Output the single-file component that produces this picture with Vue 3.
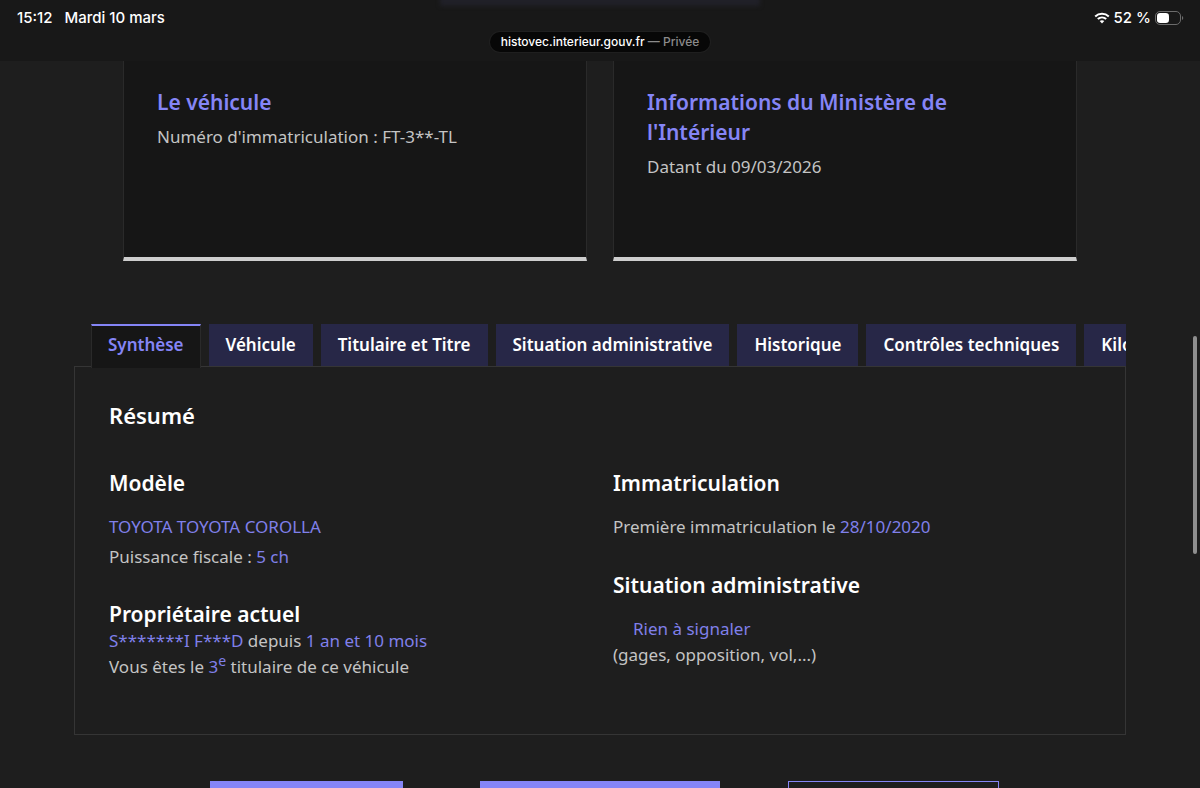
<script setup>
import { ref } from 'vue'

const tabs = [
  'Synthèse',
  'Véhicule',
  'Titulaire et Titre',
  'Situation administrative',
  'Historique',
  'Contrôles techniques',
  'Kilométrage',
]
const active = ref(0)
</script>

<template>
  <div class="screen">
    <header class="status">
      <div class="glow"></div>
      <div class="status-row">
        <div class="clock"><span>15:12</span><span>Mardi 10 mars</span></div>
        <div class="power">
          <svg class="wifi" width="16" height="12" viewBox="0 0 16 12" aria-hidden="true">
            <path d="M1.2 4.5C5 .9 11 .9 14.8 4.5" fill="none" stroke="#fff" stroke-width="2" />
            <path d="M3.8 7.1C6.2 4.9 9.8 4.9 12.2 7.1" fill="none" stroke="#fff" stroke-width="2" />
            <path d="M5.7 9.1C7 7.9 9 7.9 10.3 9.1L8 11.5Z" fill="#fff" />
          </svg>
          <span>52 %</span>
          <svg width="29" height="14" viewBox="0 0 29 14" aria-hidden="true">
            <rect x="0.5" y="0.5" width="25" height="13" rx="4.5" fill="none" stroke="#6b6b6b" />
            <rect x="2" y="2" width="12" height="10" rx="3.2" fill="#fff" />
            <path d="M27 5v4c1.7-.6 1.7-3.4 0-4Z" fill="#6b6b6b" />
          </svg>
        </div>
      </div>
      <div class="address">histovec.interieur.gouv.fr <span>— Privée</span></div>
    </header>

    <main>
      <section class="cards">
        <article class="card">
          <h3>Le véhicule</h3>
          <p>Numéro d'immatriculation : FT-3**-TL</p>
        </article>
        <article class="card">
          <h3>Informations du Ministère de l'Intérieur</h3>
          <p>Datant du 09/03/2026</p>
        </article>
      </section>

      <section class="report">
        <div class="tabs" role="tablist">
          <button
            v-for="(tab, i) in tabs"
            :key="tab"
            type="button"
            role="tab"
            class="tab"
            :class="{ active: i === active }"
            :aria-selected="i === active"
            @click="active = i"
          >{{ tab }}</button>
        </div>
        <div class="panel" role="tabpanel">
          <h2>Résumé</h2>
          <div class="columns">
            <div>
              <h4>Modèle</h4>
              <p class="first"><b>TOYOTA TOYOTA COROLLA</b></p>
              <p class="spaced">Puissance fiscale : <b>5 ch</b></p>
              <h4 class="next tight">Propriétaire actuel</h4>
              <p><b>S*******I F***D</b> depuis <b>1 an et 10 mois</b></p>
              <p>Vous êtes le <b>3<sup>e</sup></b> titulaire de ce véhicule</p>
            </div>
            <div>
              <h4>Immatriculation</h4>
              <p class="first">Première immatriculation le <b>28/10/2020</b></p>
              <h4 class="next">Situation administrative</h4>
              <p class="first indent"><b>Rien à signaler</b></p>
              <p>(gages, opposition, vol,...)</p>
            </div>
          </div>
        </div>
      </section>

      <div class="actions">
        <button type="button" class="action small"></button>
        <button type="button" class="action large"></button>
        <button type="button" class="action outline"></button>
      </div>
    </main>
    <div class="scrollbar"></div>
  </div>
</template>

<style>
body {
  background: #1e1e1e;
}
</style>

<style scoped>
* {
  box-sizing: border-box;
}
.screen {
  position: relative;
  height: 100vh;
  overflow: hidden;
  background: #1e1e1e;
  color: #c4c4c4;
  font-family: "Noto Sans", "Liberation Sans", sans-serif;
  font-size: 17px;
  line-height: 26px;
}
h2, h3, h4, p {
  margin: 0;
}
.status {
  position: relative;
  height: 61px;
  background: #181818;
  color: #fff;
  font-family: Inter, "Liberation Sans", sans-serif;
  font-size: 15px;
  font-weight: 500;
  line-height: 20px;
  overflow: hidden;
}
.glow {
  position: absolute;
  top: -8px;
  left: 50%;
  width: 320px;
  height: 14px;
  margin-left: -160px;
  background: #202028;
  filter: blur(2px);
}
.status-row {
  display: flex;
  justify-content: space-between;
  padding: 8px 16px 0 17px;
}
.clock {
  display: flex;
  gap: 12px;
}
.power {
  display: flex;
  align-items: center;
  gap: 4px;
}
.address {
  width: max-content;
  margin: 4px auto 0;
  padding: 0 11px;
  border-radius: 10px;
  background: #070707;
  box-shadow: 0 0 0 1px #1f1f1f;
  font-size: 12px;
}
.address span {
  color: #8b8b8b;
}
.cards {
  display: grid;
  grid-template-columns: 1fr 1fr;
  gap: 26px;
  margin: 0 123px;
}
.card {
  height: 200px;
  padding: 26px 33px 0;
  background: #161616;
  border: 1px solid #2a2a2a;
  border-top: 0;
  border-bottom: 4px solid #cecece;
}
.card h3 {
  margin-bottom: 7px;
  color: #8585f6;
  font-size: 21px;
  font-weight: 600;
  line-height: 30px;
}
.report {
  margin: 63px 74px 0;
}
.tabs {
  position: relative;
  display: flex;
  gap: 8px;
  height: 44px;
  margin: 0 0 -2px 17px;
  overflow: hidden;
}
.tab {
  flex: none;
  height: 42px;
  padding: 0 17px;
  border: 0;
  background: #272747;
  color: #fff;
  font: inherit;
  font-weight: 600;
}
.tab.active {
  height: 44px;
  padding: 0 16px 4px;
  border: 1px solid #2a2a2a;
  border-top: 2px solid #8585f6;
  border-bottom: 0;
  background: #161616;
  color: #8585f6;
}
.panel {
  padding: 33px 8px 54px 34px;
  border: 1px solid #353535;
}
h2, h4 {
  color: #fff;
  font-size: 21px;
  font-weight: 600;
  line-height: 30px;
}
h2 {
  font-size: 22px;
}
.columns {
  display: grid;
  grid-template-columns: 1fr 1fr;
  margin-top: 38px;
}
.first {
  margin-top: 16px;
}
.spaced {
  margin-top: 4px;
}
.next {
  margin-top: 30px;
}
.tight {
  line-height: 28px;
}
.indent {
  padding-left: 20px;
}
b {
  color: #8080ea;
  font-weight: 400;
}
sup {
  font-size: 14px;
  line-height: 0;
}
.actions {
  display: grid;
  grid-template-columns: repeat(3, 1fr);
  justify-items: center;
  margin: 46px 160px 0;
}
.action {
  height: 43px;
  border: 0;
  background: #8585f6;
}
.small {
  width: 193px;
}
.large {
  width: 240px;
}
.outline {
  width: 211px;
  border: 1px solid #8585f6;
  background: transparent;
}
.scrollbar {
  position: absolute;
  top: 336px;
  right: 3px;
  width: 4px;
  height: 218px;
  border-radius: 2px;
  background: #8f8f8f;
}
</style>
